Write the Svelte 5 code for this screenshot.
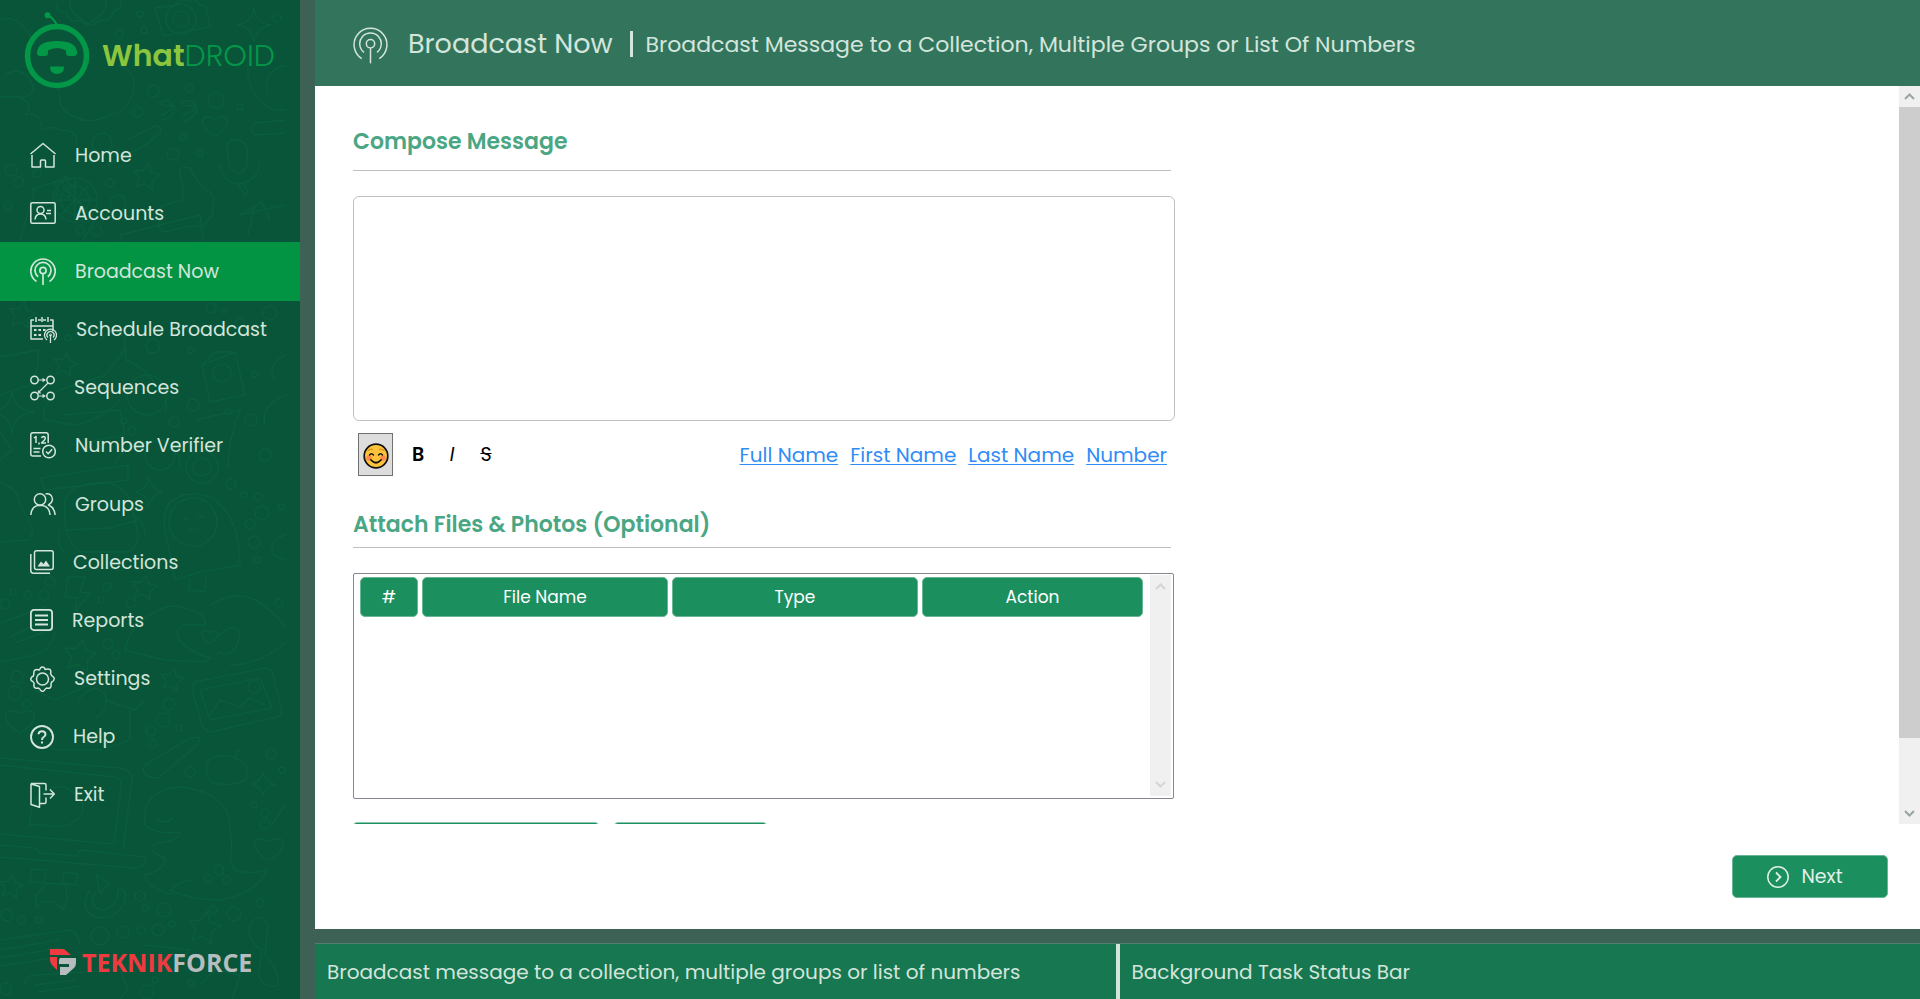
<script lang="ts">
  const nav = [
    { id: 'home', label: 'Home', w: 26, h: 26 },
    { id: 'accounts', label: 'Accounts', w: 26, h: 22 },
    { id: 'broadcast', label: 'Broadcast Now', w: 26, h: 28 },
    { id: 'schedule', label: 'Schedule Broadcast', w: 27, h: 26 },
    { id: 'sequences', label: 'Sequences', w: 25, h: 26 },
    { id: 'verifier', label: 'Number Verifier', w: 26, h: 27 },
    { id: 'groups', label: 'Groups', w: 26, h: 22 },
    { id: 'collections', label: 'Collections', w: 24, h: 24 },
    { id: 'reports', label: 'Reports', w: 23, h: 22 },
    { id: 'settings', label: 'Settings', w: 25, h: 26 },
    { id: 'help', label: 'Help', w: 24, h: 24 },
    { id: 'exit', label: 'Exit', w: 25, h: 26 }
  ];
  const active = 'broadcast';
  const fields = ['Full Name', 'First Name', 'Last Name', 'Number'];
  let message = $state('');

  // Doodle wallpaper: circles as x, y, r; stars and hearts as x, y, scale
  const dots = [
    [140, 14, 3], [119, 34, 4], [144, 30, 3], [277, 18, 4], [153, 91, 6], [189, 88, 4], [216, 100, 8], [240, 107, 3],
    [138, 112, 5], [102, 143, 10], [183, 137, 3], [173, 154, 6], [200, 153, 3], [11, 170, 6], [37, 173, 4], [19, 182, 5],
    [110, 183, 4], [8, 206, 4], [80, 230, 4], [97, 231, 5], [118, 203, 8], [211, 308, 5], [224, 311, 2], [270, 313, 7],
    [240, 322, 4], [68, 338, 3], [153, 346, 7], [191, 350, 3], [255, 374, 3], [175, 385, 4], [193, 405, 6], [228, 412, 3],
    [124, 421, 3], [132, 431, 4], [174, 422, 5], [251, 420, 6], [265, 455, 6], [231, 484, 5], [244, 495, 3], [262, 513, 7],
    [258, 497, 4], [250, 524, 5], [254, 542, 6], [257, 560, 3], [281, 507, 3], [50, 581, 5], [107, 587, 4], [28, 595, 4],
    [44, 595, 5], [13, 592, 3], [5, 604, 5], [101, 600, 3], [131, 603, 5], [108, 644, 5],
    [279, 603, 4], [116, 655, 4], [17, 677, 6], [27, 704, 4], [15, 693, 7], [169, 704, 6], [163, 720, 7], [179, 728, 3],
    [151, 731, 5], [153, 744, 4], [190, 772, 5], [271, 754, 5], [282, 770, 3], [254, 805, 3], [265, 813, 4], [265, 824, 5],
    [219, 870, 5], [208, 878, 4], [227, 880, 4], [140, 896, 5], [145, 908, 3], [164, 910, 7], [172, 924, 3], [158, 930, 6],
    [141, 930, 4], [123, 932, 6], [100, 936, 9], [213, 910, 4], [234, 914, 7], [260, 903, 4], [7, 915, 6], [21, 920, 4],
    [39, 920, 3], [147, 992, 7], [155, 980, 3], [191, 983, 3], [6, 989, 6]
  ];
  const stars = [
    [146, 177, 14], [64, 188, 12], [65, 365, 12], [22, 315, 14], [144, 588, 13], [80, 656, 17], [172, 680, 12],
    [11, 887, 12], [204, 928, 17]
  ];
  const hearts = [[215, 125, 14], [20, 720, 16], [269, 848, 16], [210, 636, 9], [88, 8, 20]];
  const sparks = [[254, 25, 17], [12, 412, 22], [149, 492, 14], [263, 784, 12]];

  const star = (x: number, y: number, r: number) =>
    'M' + Array.from({ length: 10 }, (_, i) => {
      const a = (i * Math.PI) / 5 - 1.4;
      const d = i % 2 ? r * 0.5 : r;
      return `${(x + d * Math.cos(a)).toFixed(1)} ${(y + d * Math.sin(a)).toFixed(1)}`;
    }).join('L') + 'Z';
  const heart = (x: number, y: number, r: number) =>
    `M${x} ${y + r * 0.8}C${x - r * 1.4} ${y} ${x - r} ${y - r} ${x} ${y - r * 0.4}C${x + r} ${y - r} ${x + r * 1.4} ${y} ${x} ${y + r * 0.8}Z`;
  const spark = (x: number, y: number, r: number) =>
    `M${x} ${y - r}Q${x + 2} ${y - 2} ${x + r} ${y}Q${x + 2} ${y + 2} ${x} ${y + r}Q${x - 2} ${y + 2} ${x - r} ${y}Q${x - 2} ${y - 2} ${x} ${y - r}Z`;
</script>

{#snippet antenna(w: number, h: number, s: number)}
  <svg width={w} height={h} viewBox="0 0 26 28" fill="none" stroke="currentColor" stroke-width={s} aria-hidden="true">
    <path d="M6.5 24.5A12.2 12.2 0 1 1 19.5 24.5M8.2 19.8A8 8 0 1 1 17.8 19.8" />
    <circle cx="13" cy="13.4" r="3.1" />
    <path d="M13 16.5V28" />
  </svg>
{/snippet}

{#snippet icon(id: string, w: number, h: number)}
  {#if id === 'broadcast'}
    {@render antenna(w, h, 1.7)}
  {:else}
    <svg width={w} height={h} viewBox="0 0 {w} {h}" fill="none" stroke="currentColor" stroke-width="1.5" stroke-linejoin="round" aria-hidden="true">
      {#if id === 'home'}
        <path d="M.5 12 13 1.5 25.5 12M2 13V25H10.5V19Q10.5 18 11.5 18H14.5Q15.5 18 15.5 19V25H24V13" />
      {:else if id === 'accounts'}
        <rect x=".8" y=".8" width="24.4" height="20.4" rx="1.5" />
        <circle cx="10.5" cy="8" r="3.5" />
        <path d="M5 17.5Q5.5 12 10.5 12T16 17.5M17 8.5h4M16 11.5h5" />
      {:else if id === 'schedule'}
        <path d="M4 3H1V22H13M8 3h3M13 3h3M20 3h3V14M1 9h22M6 0v5M12 0v5M18 0v5" />
        <path d="M4 13h2.5M8.5 13h2.5M13 13h2.5M4 18h2.5M8.5 18h2.5" stroke-width="2" />
        <path d="M17 23A6 6 0 1 1 24 23M18 20.5A3.5 3.5 0 1 1 23 20.5M20.5 18V26" stroke-width="1.3" />
        <circle cx="20.5" cy="18" r="1" stroke-width="1" />
      {:else if id === 'sequences'}
        <circle cx="4.5" cy="5" r="3.7" /><circle cx="20.5" cy="5" r="3.7" />
        <circle cx="4.5" cy="21" r="3.7" /><circle cx="20.5" cy="21" r="3.7" />
        <path d="M8.5 5h7M12.5 3.5l2.500 1.500-2.500 1.500M8.5 21h7M12.500 19.500l2.500 1.500-2.500 1.500M18 8 8 18M8.500 15.500v2.500h2.500" stroke-width="1.2" />
      {:else if id === 'verifier'}
        <path d="M11 24H3Q.8 24 .8 22V3Q.8 .8 3 .8H16Q18.2 .8 18.2 3V11M3.5 16.5h7M3.5 20h6" />
        <path d="M4 6 6 4.5V11M9 10.5v2M11.5 6Q12 4.5 13.5 4.5 16.5 5 14.5 8L11.5 11H16" />
        <circle cx="19" cy="19.5" r="6.3" />
        <path d="M16 19.5l2.2 2.3 4-4.5" />
      {:else if id === 'groups'}
        <circle cx="10" cy="6.5" r="5.7" />
        <path d="M.8 22Q1.5 12.5 10 12.3 19.5 12.5 20 22M15.5 1Q22 0 22.5 6.5 22 10 18.5 12 24.5 14.5 25.2 22" />
      {:else if id === 'collections'}
        <rect x="4.5" y=".8" width="18.7" height="18.7" rx="2" />
        <path d="M.8 4V20.5Q.8 23.2 3.5 23.2H20" />
        <path d="M7.5 16.5 11 11.5l2.5 2.5 2.5-3.5 4 6Z" fill="currentColor" stroke="none" />
      {:else if id === 'reports'}
        <rect x=".9" y=".9" width="21.2" height="20.2" rx="3" stroke-width="1.8" />
        <path d="M5 6.5h13M5 11h13M5 15.5h13" stroke-width="1.8" />
      {:else if id === 'settings'}
        <path d="M12.5 1Q14.5 1 15.2 3.5 18 2.5 20 3.5 21.5 5 20.5 7.5 21 9 22.3 10.2 24.5 11.5 24.2 13 24 15 21.7 16 20.7 17.5 21.2 19.5 21 21.5 19.5 22.2 18 22.5 16.5 22 15 23 14.2 24.5 12.5 26 10.8 24.5 10 23 8.5 22 6 22.8 4.5 21.7 3.5 20 4.2 17.8 4 16.5 2.7 15.5 .5 14.5 .8 13 1 11.2 3.3 10 4 8.5 3.8 6.5 3.8 4.5 5.5 3.8 7.5 3.3 9 4 10 3.5 10.5 2 11.3 1 12.5 1Z" />
        <circle cx="12.5" cy="13" r="6" />
      {:else if id === 'help'}
        <circle cx="12" cy="12" r="11" stroke-width="1.9" />
        <path d="M8.5 9.2Q8.7 6.3 12 6.3T15.5 9.2Q15.5 11 13.7 12 12 13 12 15M12 16.6v2" stroke-width="2" />
      {:else if id === 'exit'}
        <path d="M1 2 9.5 4.5V25.3L1 22.5ZM1 1.5H14.5Q16 1.5 16 3V8.5M10 21.5H14.5Q16 21.5 16 20V15.5M13.5 12H24M20 7.5l4.3 4.5L20 16.5" />
      {/if}
    </svg>
  {/if}
{/snippet}

{#snippet chevron(up: boolean)}
  <svg width="11" height="7" viewBox="0 0 11 7" fill="none" stroke="currentColor" stroke-width="2" aria-hidden="true">
    <path d={up ? 'M1 6 5.5 1.5 10 6' : 'M1 1 5.5 5.5 10 1'} />
  </svg>
{/snippet}

<div class="app">
  <aside class="sidebar">
    <svg class="doodles" viewBox="0 0 286 999" preserveAspectRatio="xMinYMin slice" aria-hidden="true">
      {#each dots as [x, y, r]}<circle cx={x} cy={y} {r} />{/each}
      {#each stars as [x, y, r]}<path d={star(x, y, r)} />{/each}
      {#each hearts as [x, y, r]}<path d={heart(x, y, r)} />{/each}
      {#each sparks as [x, y, r]}<path d={spark(x, y, r)} />{/each}
      <path d="M57 3Q55 12 66 13 70 24 80 20 90 30 100 20 112 22 113 12 124 8 120 0M155 8 175 5 180 0H195L200 5 206 7 210 27 163 36Z" />
      <circle cx="181" cy="19" r="15" /><circle cx="181" cy="19" r="8" />
      <path d="M0 20Q20 12 35 45M5 75Q20 65 30 80T20 98M60 85Q55 110 75 117 90 125 110 115 132 110 134 85 135 70 118 65M248 60Q245 90 265 105 275 112 286 110M286 65Q262 70 268 95" />
      <path d="M0 97H20Q35 105 25 115 40 110 42 130 50 125 60 130 80 130 76 145M127 140 155 126Q162 125 160 133L145 145 107 166M285 120 255 123Q248 130 255 135L285 133" />
      <path d="M161 115Q172 112 173 105 160 108 160 102 170 97 175 108 174 118 161 120M182 115Q195 112 195 105 182 108 182 102 192 97 197 108 194 120 182 122" />
      <path d="M227 145Q230 138 238 140 248 142 247 152V165Q243 175 235 172 228 168 228 160ZM219 163Q222 182 238 184 258 182 260 162M238 184 245 195 248 192 243 184" />
      <path d="M180 175Q178 165 190 168 196 180 205 190 218 194 212 205 215 215 208 220 205 228 190 226L165 232Q155 228 160 220 150 212 165 205L182 200Q185 190 180 175M240 215 262 202 270 220M255 205 248 235" />
      <path d="M30 190 60 180 95 220 80 245M20 240 35 188" /><circle cx="75" cy="200" r="22" /><circle cx="75" cy="200" r="14" />
      <path d="M62 186 88 214M88 186 62 214M75 180V220M55 200H95M120 235 200 215 205 255 130 262ZM240 215 285 205M100 340Q115 325 125 338L126 360Q150 370 158 390 170 400 165 412M125 350 105 375 60 390Q40 405 45 420L75 425Q100 420 120 400" />
      <circle cx="147" cy="395" r="20" /><path d="M0 357 38 350Q40 370 30 385L0 395M202 365 235 352 245 395 210 402ZM202 365 215 352 233 352" /><circle cx="222" cy="373" r="9" />
      <path d="M286 355Q265 365 275 380M286 395Q260 405 265 425M195 420 240 410Q228 440 228 468M63 415 120 410 125 435 70 445M115 465Q120 445 160 440 182 445 180 470M0 432 12 450 0 460" />
      <circle cx="202" cy="467" r="16" /><circle cx="202" cy="467" r="9" /><circle cx="160" cy="455" r="15" />
      <path d="M40 478 128 465V480L45 490ZM65 500Q70 485 95 483H110Q130 490 133 510L138 535Q138 550 125 552H80Q68 545 65 520ZM65 530 110 528 138 520M60 530Q55 545 65 552M132 515Q145 520 145 535" />
      <path d="M165 530Q160 500 185 495 210 490 225 510 240 530 240 565L200 572 175 580 165 530M190 578 188 590 205 592 206 575" /><circle cx="193" cy="522" r="24" />
      <path d="M182 520q4-3 7 0M197 518q4-3 7 0M187 527q6 6 12 0M0 483Q20 490 18 500L33 530 30 540 0 542M286 535Q268 540 273 555L286 560M68 577 85 577 80 592 90 593 75 612 77 598 65 597Z" />
      <path d="M125 650Q130 625 150 615 170 600 190 610 208 615 205 625H185Q175 625 178 638 185 650 210 658L205 662 165 660 125 650M210 605Q235 590 255 600 280 615 286 630M220 635Q235 620 240 635 235 660 218 652M230 665Q260 665 286 642" />
      <path d="M0 623 45 607 55 635Q50 650 35 655L0 662M10 637 45 620M15 643 50 630M35 690 55 700 100 680M78 700Q95 680 105 695 110 710 95 718M105 700 135 710 145 700M130 710V740L100 750H60Q45 750 55 735" />
      <path d="M195 682 265 668Q272 668 273 675L282 710Q282 715 277 717L210 732Q204 730 202 725L193 692Q190 685 195 682M200 690 260 678 272 708 210 720ZM210 715 220 700 240 707 250 698 265 705" /><circle cx="254" cy="687" r="6" />
      <path d="M145 765 190 738 200 737 197 745 158 778Q145 778 143 770ZM235 758Q222 752 209 760 202 772 212 782 230 788 245 780 252 765 235 758M235 758Q235 750 242 750" />
      <path d="M0 758 120 768Q132 770 132 780L123 850M0 765 115 777Q122 778 121 788L114 844 0 834M0 845 35 848 40 853 77 856 80 850 145 857Q148 865 135 868L0 857M30 825Q30 785 65 787 90 800 80 818 65 830 45 825Z" />
      <path d="M145 825Q140 790 180 787 210 790 222 805 230 810 232 850 228 860 235 870 250 875 267 870 255 895 220 900 190 900 170 890 180 880 195 880M145 825Q155 835 180 832 180 840 155 844 145 850 165 858 165 870 145 875 145 888 175 895M157 818q8 8 16 0M160 805v1M170 805v1M272 825 286 803" />
      <path d="M32 869 46 870 44 883 30 881ZM64 872 78 874 76 885 62 883ZM47 883 66 885 67 900 63 910 55 902 42 902 36 907 36 895ZM96 875 110 883 100 893ZM90 890Q78 910 95 917 115 920 123 905 130 890 118 888 118 905 105 910 85 908 96 892" />
      <path d="M0 940 70 930Q78 932 80 945M0 950 60 940M0 958 60 948M0 966 52 958M145 945 190 950 180 960M25 985Q25 975 35 975L120 970 128 990 120 999M35 985 75 980M38 992 80 986M200 985 215 970 240 975 232 999M250 925Q260 910 268 925L265 955Q280 970 278 985 265 990 258 975L262 950Q245 940 250 925" />
    </svg>

    <a class="logo" href="#home" aria-label="WhatDROID">
      <svg width="66" height="78" viewBox="0 0 66 78" aria-hidden="true">
        <circle cx="33" cy="44" r="29.500" fill="none" stroke="#029848" stroke-width="5.5" />
        <path d="M24 3.5Q29 5.500 33 13" fill="none" stroke="#029848" stroke-width="2" />
        <circle cx="23.5" cy="3.300" r="3" fill="#029848" />
        <path d="M13 40Q14 29 33 29T53 40V41Q53 44 50 44H45Q42 44 42 40.5V38.500Q38 36 33 36T24 38.500V40.500Q24 44 21 44H16Q13 44 13 41Z" fill="#029848" />
        <path d="M26 54.500H40Q40 62 33 62T26 54.500Z" fill="#029848" />
      </svg>
      <span class="word"><b>What</b>DROID</span>
    </a>

    <nav aria-label="Main">
      {#each nav as item}
        <a href="#{item.id}" class:active={item.id === active} aria-current={item.id === active ? 'page' : undefined}>
          {@render icon(item.id, item.w, item.h)}<span>{item.label}</span>
        </a>
      {/each}
    </nav>

    <a class="brand" href="#teknikforce" aria-label="TEKNIKFORCE">
      <svg width="26" height="26" viewBox="0 0 26 26" aria-hidden="true">
        <path d="M0 0H14L21 6H0ZM0 8H7V21L2 16Q0 14 0 11Z" fill="#ee3b42" />
        <path d="M10 9H26V14Q26 17 24 19L16 26H10V18H19V15H9V12Q9 10 10 9Z" fill="#b7bcbf" />
      </svg>
      <span><em>TEKNIK</em>FORCE</span>
    </a>
  </aside>

  <div class="page">
    <header>
      {@render antenna(35, 39, 1.1)}
      <h1>Broadcast Now</h1>
      <i class="bar"></i>
      <p>Broadcast Message to a Collection, Multiple Groups or List Of Numbers</p>
    </header>

    <main>
      <div class="viewport">
        <div class="form">
          <h2><label for="message">Compose Message</label></h2>
          <textarea id="message" bind:value={message}></textarea>
          <div class="tools">
            <button class="emoji" type="button" aria-label="Insert emoji">
              <svg width="26" height="26" viewBox="0 0 26 26" fill="none" stroke="#111" stroke-linecap="round" aria-hidden="true">
                <circle cx="13" cy="13" r="11.8" fill="#ffc43b" stroke-width="1.7" />
                <circle cx="6" cy="15" r="2.8" fill="#ff8a4c" stroke="none" /><circle cx="20" cy="15" r="2.8" fill="#ff8a4c" stroke="none" />
                <path d="M5 7.5Q7 5.5 9.5 6.5M16.5 6.5Q19 5.5 21 7.5" stroke="#d99822" stroke-width="1.5" />
                <path d="M6.5 12Q8.5 9.5 10.5 12M15.5 12Q17.5 9.5 19.5 12" stroke-width="1.4" />
                <path d="M8 17Q13 22.5 18 17" stroke-width="1.8" />
              </svg>
            </button>
            <button class="style" type="button" aria-label="Bold"><b>B</b></button>
            <button class="style" type="button" aria-label="Italic"><i>I</i></button>
            <button class="style" type="button" aria-label="Strikethrough"><s>S</s></button>
            <div class="fields">
              {#each fields as f}<a href="#message">{f}</a>{/each}
            </div>
          </div>

          <h2 class="attach">Attach Files &amp; Photos (Optional)</h2>
          <div class="list">
            <div class="tablebox">
              <table>
                <colgroup><col class="c1" /><col class="c2" /><col class="c2" /><col class="c3" /></colgroup>
                <thead>
                  <tr><th scope="col">#</th><th scope="col">File Name</th><th scope="col">Type</th><th scope="col">Action</th></tr>
                </thead>
              </table>
            </div>
            <div class="track faint">{@render chevron(true)}{@render chevron(false)}</div>
          </div>
          <div class="actions">
            <button type="button" class="wide" aria-label="Attach files"></button>
            <button type="button" aria-label="Clear"></button>
          </div>
        </div>
        <div class="track">
          <span class="cap">{@render chevron(true)}</span>
          <span class="thumb"></span>
          <span class="cap">{@render chevron(false)}</span>
        </div>
      </div>
      <div class="foot">
        <button class="next" type="button">
          <svg width="22" height="22" viewBox="0 0 22 22" fill="none" stroke="currentColor" stroke-width="1.5" aria-hidden="true">
            <circle cx="11" cy="11" r="10.2" /><path d="M9 6.5 13.5 11 9 15.5" stroke-width="1.8" />
          </svg>
          Next
        </button>
      </div>
    </main>

    <footer>
      <p>Broadcast message to a collection, multiple groups or list of numbers</p>
      <p>Background Task Status Bar</p>
    </footer>
  </div>
</div>

<style>
  :global(body) { margin: 0; background: #3e6155; }
  .app, .app * { box-sizing: border-box; }
  .app {
    display: grid;
    grid-template-columns: 300px minmax(0, 1fr);
    column-gap: 15px;
    height: 100vh;
    font-family: Poppins, Inter, "Liberation Sans", sans-serif;
    font-size: 19px;
    color: #d3e5dc;
  }
  h1, h2, p { margin: 0; font-weight: 400; }
  button { font: inherit; cursor: pointer; }
  a { color: inherit; text-decoration: none; }
  svg { flex: none; }

  .sidebar { position: relative; display: flex; flex-direction: column; background: #095539; overflow: hidden; }
  .doodles { position: absolute; left: 0; top: 0; width: 286px; height: 100%; fill: none; stroke: #0a5d3f; stroke-width: 1.5; }
  .logo { position: relative; display: flex; align-items: center; gap: 12px; height: 126px; padding: 0 0 24px 24px; }
  .word { font-size: 30px; font-weight: 300; line-height: 36px; padding-top: 10px; color: #029848; }
  .word b { font-weight: 600; color: #8cc63f; }
  nav { position: relative; display: flex; flex-direction: column; height: 698px; }
  nav a { display: flex; flex: 1; align-items: center; gap: 19px; padding-left: 30px; white-space: nowrap; }
  nav a.active { background: #029443; }
  .brand { position: relative; display: flex; align-items: center; gap: 6px; margin-top: auto; padding: 0 0 20px 50px; font-family: "Open Sans", sans-serif; font-size: 25px; font-weight: 700; line-height: 34px; color: #b7bcbf; }
  .brand em { font-style: normal; color: #ee3b42; }

  .page { display: flex; flex-direction: column; min-width: 0; min-height: 0; }
  header { display: flex; align-items: center; flex: none; height: 86px; padding: 2px 0 0 38px; background: #33755c; white-space: nowrap; }
  h1 { margin-left: 20px; font-size: 27px; }
  .bar { width: 3px; height: 26px; margin: 0 13px 0 17px; background: #d3e5dc; }
  header p { font-size: 22px; }

  main { display: flex; flex-direction: column; flex: 1; min-height: 0; background: #fff; }
  .viewport { display: flex; justify-content: space-between; flex: 1; min-height: 0; overflow: hidden; }
  .form { flex: 0 1 860px; min-width: 0; padding: 34px 0 0 38px; }
  h2 { width: calc(100% - 4px); height: 51px; border-bottom: 1px solid #bcbec0; font-size: 22px; font-weight: 600; line-height: 44px; color: #4aa683; }
  textarea { display: block; width: 100%; height: 225px; margin-top: 25px; padding: 12px; border: 1px solid #bfc1c4; border-radius: 6px; resize: none; font: inherit; }
  .tools { display: flex; align-items: center; height: 67px; padding: 0 8px 0 5px; color: #000; }
  .emoji { display: grid; place-items: center; width: 35px; height: 43px; margin-right: 8px; padding: 2px 0 0; border: 1px solid #707070; background: #ddd; }
  .style { width: 34px; padding: 0; border: 0; background: none; color: #000; }
  .style b { font-weight: 600; }
  .fields { display: flex; gap: 12px; margin-left: auto; font-size: 20px; color: #2f8cf6; }
  .fields a { text-decoration: underline; text-decoration-thickness: 1px; text-underline-offset: 2px; }
  .attach { height: 60px; line-height: 74px; }

  .list { display: flex; justify-content: space-between; width: calc(100% - 1px); height: 226px; margin-top: 25px; padding: 1px 2px 2px; border: 1px solid #828790; border-radius: 2px; }
  .tablebox { flex: 1; }
  table { width: 100%; max-width: 791px; table-layout: fixed; border-collapse: separate; border-spacing: 4px 2px; }
  .c1 { width: 58px; }
  .c2 { width: 246px; }
  .c3 { width: 221px; }
  th { height: 40px; padding: 0; border: 1px solid #66b593; border-radius: 5px; background: #1c8f5f; color: #fff; font-size: 17px; font-weight: 400; }
  .track { display: flex; flex-direction: column; align-items: center; flex: none; width: 21px; background: #f0f0f0; color: #98a5a1; }
  .track.faint { justify-content: space-between; padding: 8px 0; color: #d2d6d5; }
  .cap { display: grid; place-items: center; flex: none; width: 21px; height: 21px; }
  .thumb { width: 21px; flex: 0 1 85.5%; margin-bottom: auto; background: #cdcdcd; }
  .actions { display: flex; gap: 15px; margin-top: 23px; }
  .actions button { width: 153px; height: 42px; border: 1px solid #8cc9ae; border-radius: 4px; background: #1c8f5f; }
  .actions .wide { width: 246px; }

  .foot { display: flex; justify-content: flex-end; align-items: flex-start; flex: none; height: 105px; padding: 31px 32px 0 0; }
  .next { display: flex; align-items: center; justify-content: center; gap: 12px; width: 156px; height: 43px; padding: 0 10px 0 0; border: 1px solid #66b593; border-radius: 5px; background: #1c8f5f; color: #e0f0e8; }

  footer { display: flex; flex: none; height: 56px; margin-top: 14px; border-top: 1px solid #52806c; background: #177750; font-size: 20px; line-height: 57px; white-space: nowrap; }
  footer p { flex: 1; padding-left: 12px; overflow: hidden; }
  footer p + p { border-left: 4px solid #d3e5dc; }
</style>
